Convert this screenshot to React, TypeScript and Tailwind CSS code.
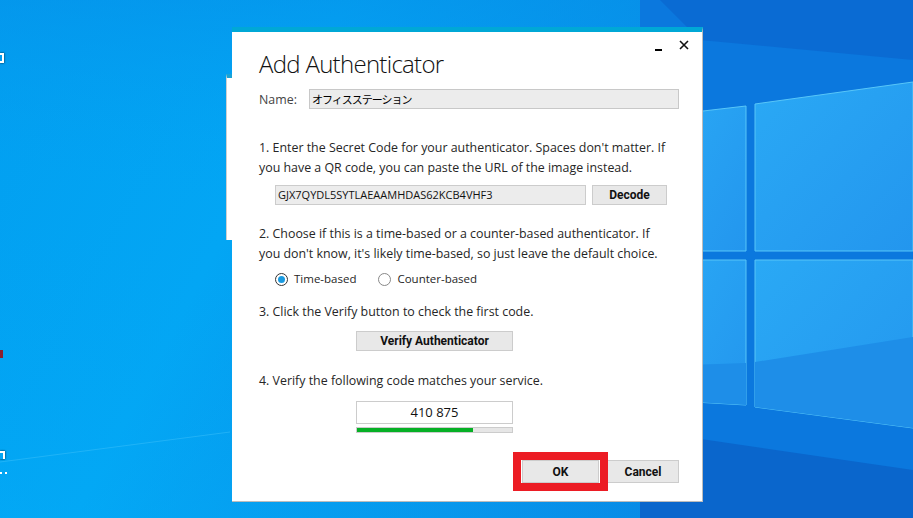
import React from "react";

const ui = { fontFamily: '"Open Sans", "Noto Sans CJK JP", sans-serif' };
const bold = { fontFamily: 'Roboto, "Open Sans", sans-serif' };

function Wallpaper() {
  return (
    <svg className="absolute inset-0" width="913" height="518" viewBox="0 0 913 518">
      <defs>
        <linearGradient id="bg" x1="0" y1="0" x2="1" y2="0.3">
          <stop offset="0" stopColor="#029ff0" />
          <stop offset="0.35" stopColor="#03a6f4" />
          <stop offset="0.7" stopColor="#0a8ce6" />
          <stop offset="1" stopColor="#0a6fd9" />
        </linearGradient>
        <linearGradient id="bgv" x1="0" y1="0" x2="0" y2="1">
          <stop offset="0" stopColor="#0592ea" stopOpacity="0.6" />
          <stop offset="0.4" stopColor="#03a4f4" stopOpacity="0" />
          <stop offset="1" stopColor="#03acf7" stopOpacity="0.4" />
        </linearGradient>
        <linearGradient id="pane" x1="0" y1="0" x2="1" y2="1">
          <stop offset="0" stopColor="#2aa9f5" />
          <stop offset="1" stopColor="#2396ee" />
        </linearGradient>
      </defs>
      <rect width="913" height="518" fill="url(#bg)" />
      <rect width="913" height="518" fill="url(#bgv)" />
      <polygon points="640,0 913,0 913,518 640,518" fill="#0b78de" />
      <polygon points="660,0 913,0 913,60 700,40" fill="#0a62cc" opacity="0.6" />
      <polygon points="640,430 913,470 913,518 640,518" fill="#0a66cc" />
      <polygon points="660,116 746,106 746,251 660,251" fill="url(#pane)" stroke="#58c6f8" strokeWidth="1" />
      <polygon points="755,104 913,82 913,251 755,251" fill="url(#pane)" stroke="#58c6f8" strokeWidth="1" />
      <polygon points="660,260 746,260 746,405 660,400" fill="url(#pane)" stroke="#58c6f8" strokeWidth="1" />
      <polygon points="755,260 913,260 913,428 755,407" fill="url(#pane)" stroke="#58c6f8" strokeWidth="1" />
      <polygon points="660,366 746,363 746,405 660,400" fill="#1e8ee8" />
      <polygon points="755,362 913,337 913,428 755,407" fill="#1e8ee8" />
      <line x1="0" y1="462" x2="230" y2="432" stroke="#3cc0fa" strokeWidth="1" opacity="0.5" />
    </svg>
  );
}

function Btn({ children, className }: { children: React.ReactNode; className: string }) {
  return (
    <div className={"flex items-center justify-center border border-[#cccccc] bg-[#e8e8e8] text-[12px] font-bold text-[#111] " + className} style={bold}>
      {children}
    </div>
  );
}

function Radio({ checked, label }: { checked?: boolean; label: string }) {
  return (
    <div className="flex items-center">
      <span className={"flex h-[13px] w-[13px] items-center justify-center rounded-full border " + (checked ? "border-[#333]" : "border-[#888]")}>
        {checked && <span className="h-[7px] w-[7px] rounded-full bg-[#1a9ae0]" />}
      </span>
      <span className="ml-[6px]">{label}</span>
    </div>
  );
}

export default function App() {
  return (
    <div className="relative h-[518px] w-[913px] overflow-hidden" style={ui}>
      <Wallpaper />

      {/* desktop icon fragments on the left edge */}
      <span className="absolute left-0 top-[53px] h-[10px] w-[4px] border-y-2 border-r-2 border-white shadow-[0_0_2px_#000]" />
      <span className="absolute left-0 top-[350px] h-[8px] w-[3px] bg-[#8a2030]" />
      <span className="absolute left-0 top-[451px] h-[8px] w-[5px] border-t-2 border-r-2 border-white shadow-[0_0_2px_#000]" />
      <span className="absolute left-0 top-[472px] h-[2px] w-[7px] border-x-2 border-white" />

      {/* window behind */}
      <div className="absolute left-[226px] top-[74px] h-[166px] w-[300px] border-t-4 border-[#1aa3d6] bg-white border-l border-l-[#cfcfcf]" />

      {/* dialog */}
      <div className="absolute left-[232px] top-[27px] flex h-[475px] w-[471px] flex-col border-t-[5px] border-r border-b border-[#bcbcbc] border-t-[#00a8d6] bg-white pl-[27px] pr-[23px] text-[12.4px] text-[#262626]">
        <div className="absolute right-[13px] top-[7px] flex items-center gap-[17px]">
          <span className="mt-[10px] h-[2px] w-[7px] bg-black" />
          <svg width="10" height="10" viewBox="0 0 10 10">
            <path d="M1 1 L9 9 M9 1 L1 9" stroke="#111" strokeWidth="1.6" />
          </svg>
        </div>

        <div className="mt-[16px] h-[32px] text-[24px] font-light leading-[32px] tracking-[-0.7px] text-[#111]">Add Authenticator</div>

        <div className="mt-[9px] flex h-[20px] items-center">
          <span className="w-[50px] pt-[2px] text-[#444]">Name:</span>
          <div className="flex h-[20px] flex-1 items-center border border-[#c8c8c8] bg-[#ececec] pl-[2px] text-[11px] tracking-[-1px] text-black" style={{ fontFamily: '"Noto Sans CJK JP", sans-serif' }}>
            オフィスステーション
          </div>
        </div>

        <div className="mt-[29px] whitespace-nowrap leading-[20px]">
          1. Enter the Secret Code for your authenticator. Spaces don't matter. If
          <br />
          you have a QR code, you can paste the URL of the image instead.
        </div>

        <div className="mt-[7px] flex h-[20px] pl-[16px]">
          <div className="flex h-[20px] w-[311px] items-center border border-[#cccccc] bg-[#ececec] pl-[2px] text-[11px] text-[#111]">
            GJX7QYDL5SYTLAEAAMHDAS62KCB4VHF3
          </div>
          <Btn className="ml-[6px] h-[20px] w-[75px]">Decode</Btn>
        </div>

        <div className="mt-[19px] whitespace-nowrap leading-[20px]">
          2. Choose if this is a time-based or a counter-based authenticator. If
          <br />
          you don't know, it's likely time-based, so just leave the default choice.
        </div>

        <div className="mt-[5px] flex h-[20px] items-center gap-[22px] pl-[16px] text-[11.5px]">
          <Radio checked label="Time-based" />
          <Radio label="Counter-based" />
        </div>

        <div className="mt-[13px] whitespace-nowrap leading-[20px]">3. Click the Verify button to check the first code.</div>

        <Btn className="ml-[97px] mt-[9px] h-[20px] w-[157px]">Verify Authenticator</Btn>

        <div className="mt-[20px] whitespace-nowrap leading-[20px]">4. Verify the following code matches your service.</div>

        <div className="ml-[97px] mt-[10px] flex h-[23px] w-[157px] items-center justify-center border border-[#cccccc] bg-white text-[13px] text-[#111]">
          410 875
        </div>
        <div className="ml-[97px] mt-[3px] flex h-[6px] w-[157px] border border-[#cccccc] bg-[#e6e6e6]">
          <div className="h-full bg-[#06b025]" style={{ width: "75%" }} />
        </div>

        <div className="mt-[27px] flex justify-end gap-[8px]">
          <div className="relative">
            <Btn className="h-[23px] w-[77px]">OK</Btn>
            <div className="absolute -bottom-[8px] -left-[9px] -right-[9px] -top-[8px] border-[8px] border-[#ec1c24]" />
          </div>
          <Btn className="h-[23px] w-[72px]">Cancel</Btn>
        </div>
      </div>
    </div>
  );
}
